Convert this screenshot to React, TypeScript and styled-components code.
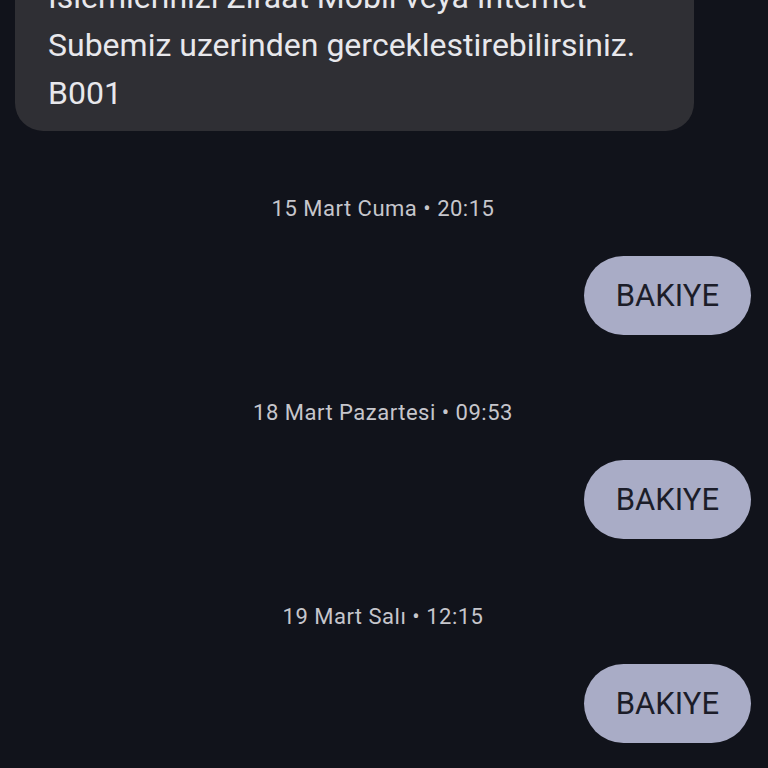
import styled, { createGlobalStyle } from "styled-components";

const GlobalStyle = createGlobalStyle`
  html, body {
    margin: 0;
    padding: 0;
    background: #11131b;
  }
  body {
    font-family: Roboto, "Noto Sans", "Liberation Sans", sans-serif;
  }
`;

const Thread = styled.div`
  height: 768px;
  overflow: hidden;
  background: #11131b;
  padding: 0 17px 0 15px;
  display: flex;
  flex-direction: column;
`;

const IncomingBubble = styled.div`
  align-self: flex-start;
  width: 679px;
  box-sizing: border-box;
  margin-top: -47px;
  padding: 20px 30px 14px 33px;
  background: #2f2f34;
  border-radius: 0 0 28px 28px;
  color: #e8e8ec;
  font-size: 32px;
  line-height: 48px;
`;

const Group = styled.div`
  display: flex;
  flex-direction: column;
  margin-top: 64px;
`;

const Stamp = styled.div`
  text-align: center;
  color: #c6c6cc;
  font-size: 22px;
  letter-spacing: 0.5px;
  line-height: 28px;
`;

const OutgoingBubble = styled.div`
  align-self: flex-end;
  margin-top: 33px;
  height: 79px;
  padding: 0 32px;
  display: inline-flex;
  align-items: center;
  border-radius: 40px;
  background: #a9acc6;
  color: #1c1d29;
  font-size: 31px;
`;

type Sent = {
  when: string;
  text: string;
};

const sentMessages: Sent[] = [
  { when: "15 Mart Cuma • 20:15", text: "BAKIYE" },
  { when: "18 Mart Pazartesi • 09:53", text: "BAKIYE" },
  { when: "19 Mart Salı • 12:15", text: "BAKIYE" },
];

export default function App() {
  return (
    <>
      <GlobalStyle />
      <Thread>
        <IncomingBubble>
          Islemlerinizi Ziraat Mobil veya Internet
          <br />
          Subemiz uzerinden gerceklestirebilirsiniz.
          <br />
          B001
        </IncomingBubble>
        {sentMessages.map((m) => (
          <Group key={m.when}>
            <Stamp>{m.when}</Stamp>
            <OutgoingBubble>{m.text}</OutgoingBubble>
          </Group>
        ))}
      </Thread>
    </>
  );
}
